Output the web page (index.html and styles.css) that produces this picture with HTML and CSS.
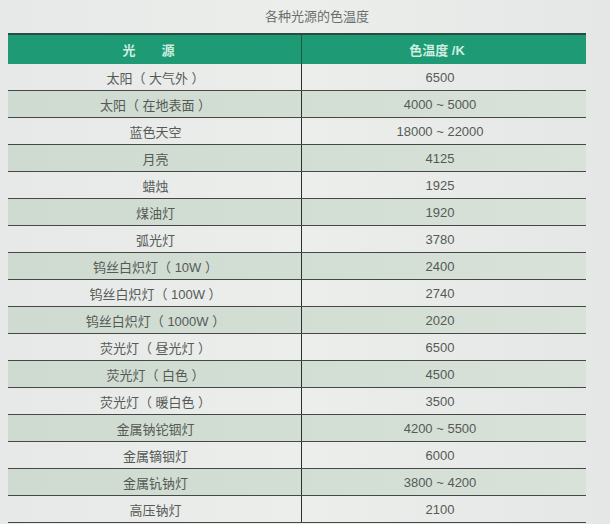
FILE: index.html
```html
<!DOCTYPE html>
<html lang="zh">
<head>
<meta charset="utf-8">
<link rel="stylesheet" href="styles.css">
</head>
<body>
<div class="page">
  <div class="title">各种光源的色温度</div>
  <div class="table">
    <div class="row head"><div class="c1">光　　源</div><div class="c2">色温度 /K</div></div>
    <div class="row"><div class="c1">太阳（ 大气外 ）</div><div class="c2">6500</div></div>
    <div class="row alt"><div class="c1">太阳（ 在地表面 ）</div><div class="c2">4000 ~ 5000</div></div>
    <div class="row"><div class="c1">蓝色天空</div><div class="c2">18000 ~ 22000</div></div>
    <div class="row alt"><div class="c1">月亮</div><div class="c2">4125</div></div>
    <div class="row"><div class="c1">蜡烛</div><div class="c2">1925</div></div>
    <div class="row alt"><div class="c1">煤油灯</div><div class="c2">1920</div></div>
    <div class="row"><div class="c1">弧光灯</div><div class="c2">3780</div></div>
    <div class="row alt"><div class="c1">钨丝白炽灯（ 10W ）</div><div class="c2">2400</div></div>
    <div class="row"><div class="c1">钨丝白炽灯（ 100W ）</div><div class="c2">2740</div></div>
    <div class="row alt"><div class="c1">钨丝白炽灯（ 1000W ）</div><div class="c2">2020</div></div>
    <div class="row"><div class="c1">荧光灯（ 昼光灯 ）</div><div class="c2">6500</div></div>
    <div class="row alt"><div class="c1">荧光灯（ 白色 ）</div><div class="c2">4500</div></div>
    <div class="row"><div class="c1">荧光灯（ 暖白色 ）</div><div class="c2">3500</div></div>
    <div class="row alt"><div class="c1">金属钠铊铟灯</div><div class="c2">4200 ~ 5500</div></div>
    <div class="row"><div class="c1">金属镝铟灯</div><div class="c2">6000</div></div>
    <div class="row alt"><div class="c1">金属钪钠灯</div><div class="c2">3800 ~ 4200</div></div>
    <div class="row"><div class="c1">高压钠灯</div><div class="c2">2100</div></div>
  </div>
</div>
</body>
</html>
```
FILE: styles.css
```css
html, body {
  margin: 0;
  padding: 0;
}
body {
  width: 610px;
  height: 524px;
  overflow: hidden;
  background: linear-gradient(90deg, #e6e9e7 0%, #eceeec 50%, #e4e7e5 100%);
  font-family: "Liberation Sans", "Noto Sans CJK SC", sans-serif;
  color: #555a57;
}
.page {
  padding: 8px 0 0 8px;
  width: 578px;
}
.title {
  text-align: center;
  font-size: 13px;
  color: #6a6e6b;
  height: 25px;
  line-height: 18px;
  padding-left: 40px;
}
.table {
  width: 578px;
  display: flex;
  flex-direction: column;
}
.row {
  display: grid;
  grid-template-columns: 294px 1fr;
  height: 27px;
  border-bottom: 1px solid #454846;
  box-sizing: border-box;
  font-size: 13px;
  align-items: center;
}
.row > div {
  height: 100%;
  display: flex;
  align-items: center;
  justify-content: center;
}
.row .c1 {
  border-right: 1px solid #2e302f;
  padding-left: 2px;
  box-sizing: border-box;
}
.row .c2 {
  padding-right: 8px;
  box-sizing: border-box;
}
.row.alt {
  background: linear-gradient(90deg, #cfdbd0 0%, #d3ded4 60%, #d9e2d9 100%);
}
.row.head {
  height: 31px;
  background: #1e9a74;
  border-top: 2px solid #2c4a40;
  border-bottom: none;
  color: #cdeee0;
  font-size: 13px;
  font-weight: bold;
}
.row.head .c1 {
  border-right: 1px solid #1b5a45;
  padding-left: 0;
  padding-right: 12px;
}
.row.head .c2 {
  padding-right: 14px;
}
```
